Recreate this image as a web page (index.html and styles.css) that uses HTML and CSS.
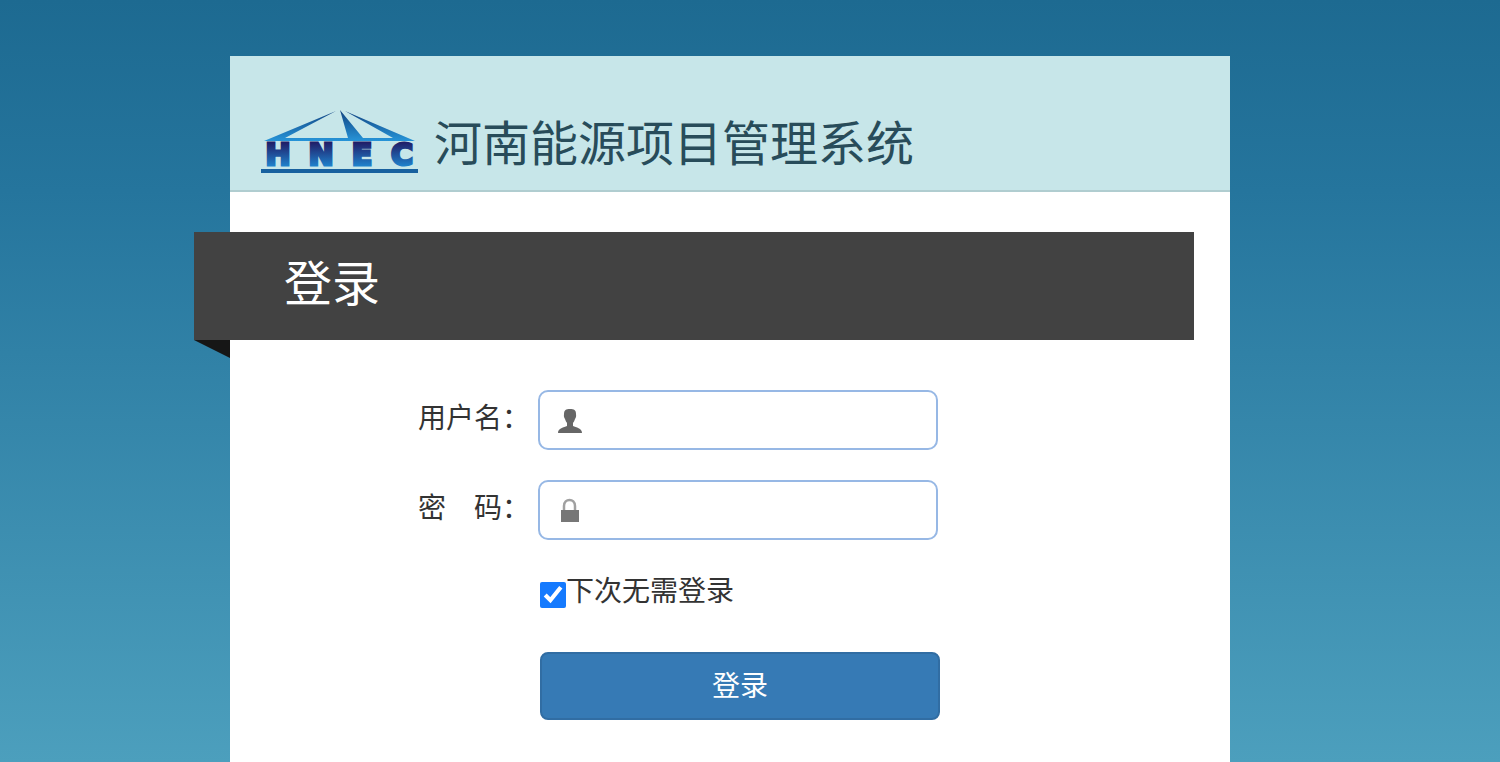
FILE: index.html
```
<!DOCTYPE html>
<html lang="zh-CN">
<head>
    <meta charset="UTF-8">
    <meta name="viewport" content="width=device-width, initial-scale=1">
    <title>河南能源项目管理系统</title>
    <link rel="stylesheet" href="styles.css">
</head>
<body>
    <div class="container">
        <header class="header">
            <svg class="logo" viewBox="0 0 160 66" role="img" aria-label="HNEC">
                <defs>
                    <linearGradient id="roof" x1="0" y1="0" x2="0" y2="32" gradientUnits="userSpaceOnUse">
                        <stop offset="0" stop-color="#123f7c"/>
                        <stop offset="1" stop-color="#2694d8"/>
                    </linearGradient>
                    <linearGradient id="letters" x1="0" y1="33" x2="0" y2="58" gradientUnits="userSpaceOnUse">
                        <stop offset="0" stop-color="#201c66"/>
                        <stop offset="1" stop-color="#1f85cf"/>
                    </linearGradient>
                </defs>
                <path fill="url(#roof)" d="M76 2 L4 32 H155 L85 2 L133 29 H103 L80 1 L88 29 H25 Z"/>
                <g class="logo-text" fill="url(#letters)" stroke="url(#letters)">
                    <text x="18" y="56">H</text>
                    <text x="61" y="56">N</text>
                    <text x="102" y="56">E</text>
                    <text x="142" y="56">C</text>
                </g>
                <path fill="#18619f" d="M1 60 H158 V64 H1 Z"/>
            </svg>
            <h1>河南能源项目管理系统</h1>
        </header>

        <div class="ribbon">
            <h2>登录</h2>
        </div>

        <form class="login-form">
            <div class="field">
                <label for="username">用户名：</label>
                <div class="input-box">
                    <input type="text" id="username" name="username">
                    <svg class="icon" viewBox="0 0 28 28" aria-hidden="true">
                        <path fill="#666" d="M14 3 C18 3 20 4 20 8 C20.500 11 19.500 12 19 13 C18.500 15 17.500 16 17 17 V20 C20 21.500 26 22 26 27 H2 C2 22 8 21.500 11 20 V17 C10.500 16 9.500 15 9 13 C8.500 12 7.500 11 8 8 C8 4 10 3 14 3 Z"/>
                    </svg>
                </div>
            </div>
            <div class="field">
                <label for="password">密　码：</label>
                <div class="input-box">
                    <input type="password" id="password" name="password">
                    <svg class="icon" viewBox="0 0 28 28" aria-hidden="true">
                        <path fill="none" stroke="#a0a0a0" stroke-width="2.500" d="M8 15 V10 C8 2 19 2 19 10 V15"/>
                        <path fill="#777" d="M5 14 H23 V26 H5 Z"/>
                    </svg>
                </div>
            </div>
            <div class="actions">
                <div class="remember">
                    <input type="checkbox" id="remember" checked>
                    <label for="remember">下次无需登录</label>
                </div>
                <button type="submit" class="btn">登录</button>
            </div>
        </form>
    </div>
</body>
</html>
```
FILE: styles.css
```
* {
    box-sizing: border-box;
}

body {
    display: flex;
    min-height: 100vh;
    margin: 0;
    padding: 56px 40px 0 0;
    font-family: "Liberation Sans", "Noto Sans CJK SC", sans-serif;
    font-size: 28px;
    color: #333;
    background: linear-gradient(#1d6a91 0, #25759d 25%, #4c9fbd 100%);
}

.container {
    width: 100%;
    max-width: 1000px;
    margin: 0 auto;
    background-color: #fff;
}

.header {
    display: flex;
    align-items: flex-end;
    gap: 14px;
    height: 136px;
    padding: 0 30px 15px;
    background-color: #c7e6e9;
    border-bottom: 2px solid #b0cdd0;
}

.logo {
    flex: none;
    width: 160px;
    height: 66px;
}

.logo-text {
    font-family: "DejaVu Sans", sans-serif;
    font-size: 30px;
    font-weight: bold;
    text-anchor: middle;
    stroke-width: 3px;
}

h1,
h2 {
    margin: 0;
    font-size: 48px;
    font-weight: normal;
    line-height: 60px;
}

h1 {
    color: #284c5a;
}

.ribbon {
    position: relative;
    margin: 40px 36px 50px -36px;
    padding: 23px 90px 25px;
    color: #fff;
    background-color: #424242;
}

/* folded corner */
.ribbon::after {
    content: "";
    position: absolute;
    top: 100%;
    left: 0;
    border-top: 18px solid #161616;
    border-left: 36px solid transparent;
}

.login-form {
    padding: 0 40px 40px 188px;
}

.field {
    display: flex;
    gap: 8px;
    margin-bottom: 30px;
}

.field label {
    flex: none;
    width: 112px;
    line-height: 58px;
}

.input-box {
    position: relative;
    width: 400px;
}

.input-box input {
    display: block;
    width: 100%;
    height: 60px;
    padding: 0 16px 0 56px;
    font: inherit;
    color: inherit;
    background-color: #fff;
    border: 2px solid #97b8e5;
    border-radius: 10px;
}

.icon {
    position: absolute;
    top: 16px;
    left: 18px;
    width: 28px;
    height: 28px;
}

.actions {
    width: 522px;
    max-width: 100%;
    padding-left: 122px;
}

.remember {
    display: flex;
    align-items: center;
    margin-bottom: 38px;
    line-height: 44px;
}

.remember input {
    width: 26px;
    height: 26px;
    margin: 6px 0 0;
    accent-color: #157afe;
}

.btn {
    display: block;
    width: 100%;
    height: 68px;
    padding: 0 0 4px;
    font: inherit;
    color: #fff;
    cursor: pointer;
    background-color: #367ab5;
    border: 2px solid #316da3;
    border-radius: 8px;
}

.btn:hover {
    background-color: #2f6a9e;
}
```
